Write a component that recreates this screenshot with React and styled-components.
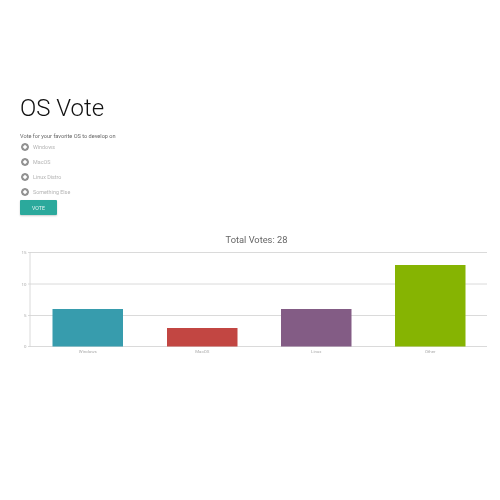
import React from 'react'
import styled, { createGlobalStyle } from 'styled-components'

const GlobalStyle = createGlobalStyle`
  html, body {
    margin: 0;
    background: #fff;
    font-family: Roboto, 'Liberation Sans', sans-serif;
  }
`

const Page = styled.div`
  width: 500px;
  height: 500px;
  box-sizing: border-box;
  padding-top: 94px;
  filter: blur(0.45px);
  overflow: hidden;
`

const VoteForm = styled.form`
  padding-left: 20px;
  display: flex;
  flex-direction: column;
  align-items: flex-start;
`

const Title = styled.h1`
  margin: 0;
  font-size: 24px;
  line-height: 28px;
  font-weight: 300;
  color: #111;
`

const Prompt = styled.p`
  margin: 9px 0 0;
  font-size: 5.6px;
  line-height: 10px;
  color: #666;
`

const Options = styled.div`
  display: flex;
  flex-direction: column;
  gap: 5px;
  margin-top: 1px;
`

const Option = styled.label`
  display: flex;
  align-items: center;
  gap: 4px;
  height: 10px;
  padding-left: 1px;
  font-size: 5.4px;
  color: #b4b4b4;
`

const Radio = styled.span`
  width: 6px;
  height: 6px;
  border: 1.2px solid #888;
  border-radius: 50%;
  background: radial-gradient(circle, #fff 0 1.4px, #999 2.1px);
`

const VoteButton = styled.button`
  width: 37px;
  height: 15px;
  margin-top: 3px;
  padding: 0;
  border: 0;
  border-radius: 1px;
  background: #2ba99c;
  color: #e6f5f3;
  font-family: inherit;
  font-size: 5.2px;
  box-shadow: 0 1px 2px rgba(0, 0, 0, 0.2);
`

const ChartTitle = styled.h2`
  margin: 19px 0 1px;
  text-align: center;
  font-size: 9.3px;
  line-height: 12px;
  font-weight: 400;
  color: #666;
  padding-left: 13px;
`

const ChartSvg = styled.svg`
  display: block;
  text {
    font-family: Roboto, 'Liberation Sans', sans-serif;
    font-size: 4.4px;
    fill: #aaa;
  }
`

const ticks = [
  { label: '15', y: 252.5 },
  { label: '10', y: 284 },
  { label: '5', y: 315.5 },
  { label: '0', y: 346.5 },
]

const bars = [
  { label: 'Windows', x: 52.5, top: 309, color: '#379cad' },
  { label: 'MacOS', x: 167, top: 328, color: '#c24642' },
  { label: 'Linux', x: 281, top: 309, color: '#835c85' },
  { label: 'Other', x: 395, top: 265, color: '#86b402' },
]

// svg coordinates are kept in page space, the viewBox starts where the chart does
const Chart = () => (
  <ChartSvg width="500" height="120" viewBox="0 247 500 120">
    {ticks.map(t => (
      <g key={t.label}>
        <line x1="28" x2="487" y1={t.y} y2={t.y} stroke="#d6d6d6" strokeWidth="0.9" />
        <text x="26.5" y={t.y + 1.6} textAnchor="end">{t.label}</text>
      </g>
    ))}
    <line x1="30" x2="30" y1="252" y2="347" stroke="#d6d6d6" strokeWidth="0.9" />
    {bars.map(b => (
      <g key={b.label}>
        <rect x={b.x} y={b.top} width="70.5" height={346.5 - b.top} fill={b.color} />
        <text x={b.x + 35.25} y="352.5" textAnchor="middle">{b.label}</text>
      </g>
    ))}
  </ChartSvg>
)

export default function App() {
  const options = ['Windows', 'MacOS', 'Linux Distro', 'Something Else']
  return (
    <Page>
      <GlobalStyle />
      <VoteForm>
        <Title>OS Vote</Title>
        <Prompt>Vote for your favorite OS to develop on</Prompt>
        <Options>
          {options.map(o => (
            <Option key={o}>
              <Radio />
              {o}
            </Option>
          ))}
        </Options>
        <VoteButton type="button">VOTE</VoteButton>
      </VoteForm>
      <ChartTitle>Total Votes: 28</ChartTitle>
      <Chart />
    </Page>
  )
}
